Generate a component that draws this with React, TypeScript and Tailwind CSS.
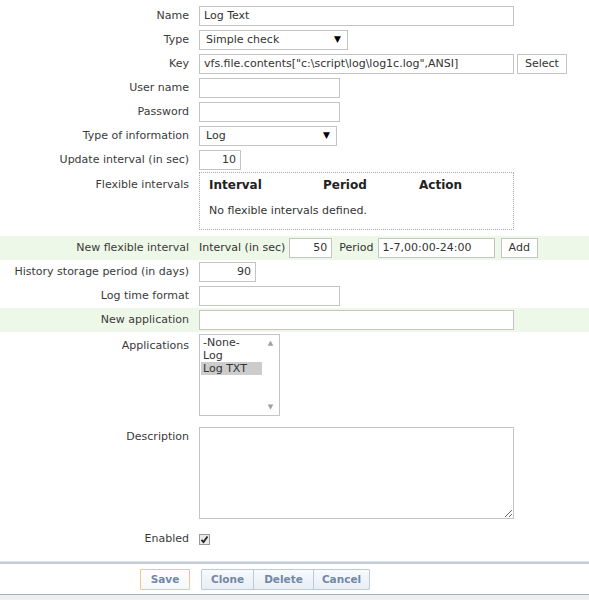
import React from "react";

const font = { fontFamily: '"DejaVu Sans", Verdana, sans-serif' };

function Row({ label, children, green, top, labelPad }: { label: string; children: React.ReactNode; green?: boolean; top?: boolean; labelPad?: string }) {
  return (
    <div className={`flex py-[2px] ${green ? "bg-[#eef8e8]" : ""} ${top ? "items-start" : "items-center"}`}>
      <div className={`w-[199px] shrink-0 pr-[10px] text-right text-[#3a3a3a] ${labelPad ?? ""}`}>{label}</div>
      <div className="flex items-center">{children}</div>
    </div>
  );
}

function Input({ w, value, right }: { w: string; value?: string; right?: boolean }) {
  return (
    <div className={`${w} h-[20px] border border-[#c4c4c4] bg-white px-[4px] leading-[18px] text-[#333] whitespace-nowrap overflow-hidden ${right ? "text-right" : ""}`}>
      {value}
    </div>
  );
}

function Select({ w, value }: { w: string; value: string }) {
  return (
    <div className={`${w} h-[20px] border border-[#c4c4c4] bg-white pl-[6px] pr-[6px] flex items-center justify-between text-[#333]`}>
      <span>{value}</span>
      <span className="text-[9px] text-black">▼</span>
    </div>
  );
}

function Btn({ children }: { children: React.ReactNode }) {
  return (
    <div className="h-[20px] border border-[#c4c4c4] bg-white px-[7px] leading-[18px] text-[#333]">{children}</div>
  );
}

export default function App() {
  return (
    <div className="w-[589px] h-[600px] bg-white text-[11px] overflow-hidden flex flex-col" style={font}>
      <div className="pt-[4px]">
        <Row label="Name"><Input w="w-[315px]" value="Log Text" /></Row>
        <Row label="Type"><Select w="w-[149px]" value="Simple check" /></Row>
        <Row label="Key">
          <Input w="w-[315px]" value={'vfs.file.contents["c:\\script\\log\\log1c.log",ANSI]'} />
          <div className="ml-[3px]"><Btn>Select</Btn></div>
        </Row>
        <Row label="User name"><Input w="w-[141px]" /></Row>
        <Row label="Password"><Input w="w-[141px]" /></Row>
        <Row label="Type of information"><Select w="w-[138px]" value="Log" /></Row>
        <Row label="Update interval (in sec)"><Input w="w-[42px]" value="10" right /></Row>
        <div className="-mt-[2px]" />
        <Row label="Flexible intervals" top labelPad="pt-[5px]">
          <div className="w-[315px] h-[58px] border border-dotted border-[#a8a8a8] px-[9px] pt-[3px]">
            <div className="flex font-bold text-[12px] text-[#222]">
              <div className="w-[114px]">Interval</div>
              <div className="w-[96px]">Period</div>
              <div>Action</div>
            </div>
            <div className="mt-[9px] text-[#333]">No flexible intervals defined.</div>
          </div>
        </Row>
        <div className="h-[4px]" />
        <Row label="New flexible interval" green>
          <span className="text-[#333]">Interval (in sec)</span>
          <div className="ml-[4px]"><Input w="w-[43px]" value="50" right /></div>
          <span className="ml-[7px] text-[#333]">Period</span>
          <div className="ml-[4px]"><Input w="w-[117px]" value="1-7,00:00-24:00" /></div>
          <div className="ml-[6px]"><Btn>Add</Btn></div>
        </Row>
        <Row label="History storage period (in days)"><Input w="w-[57px]" value="90" right /></Row>
        <Row label="Log time format"><Input w="w-[141px]" /></Row>
        <Row label="New application" green><Input w="w-[315px]" /></Row>
        <Row label="Applications" top labelPad="pt-[4px]">
          <div className="w-[81px] h-[82px] border border-[#c4c4c4] bg-white flex">
            <div className="flex-1 pt-[1px] pl-[1px] leading-[13px] text-[#333]">
              <div className="pl-[2px]">-None-</div>
              <div className="pl-[2px]">Log</div>
              <div className="pl-[2px] bg-[#cccccc]">Log TXT</div>
            </div>
            <div className="w-[17px] flex flex-col justify-between items-center py-[3px] text-[7px] text-[#a0a0a0]">
              <span>▲</span>
              <span>▼</span>
            </div>
          </div>
        </Row>
        <div className="h-[7px]" />
        <Row label="Description" top labelPad="pt-[2px]">
          <textarea className="w-[315px] h-[92px] border border-[#c4c4c4] bg-white block" />
        </Row>
        <div className="h-[8px]" />
        <Row label="Enabled">
          <div className="w-[11px] h-[11px] border border-[#9a9a9a] bg-[#eaeaea] flex items-center justify-center">
            <svg width="9" height="9" viewBox="0 0 9 9">
              <path d="M1.5 4.8 L3.5 7 L7.5 1.5" stroke="#222" strokeWidth="1.8" fill="none" />
            </svg>
          </div>
        </Row>
      </div>
      <div className="mt-[11px] border-t border-[#dbe3ea]" />
      <div className="border-t-[2px] border-[#c3ced8]" />
      <div className="h-[31px] flex items-center pt-[2px] border-b border-[#aab3bb] text-[10.5px]">
        <div className="ml-[140px] w-[50px] text-center h-[21px] border border-[#f2c688] bg-gradient-to-b from-white to-[#f5f7fa] leading-[19px] font-bold text-[#7188a6] rounded-[1px]">Save</div>
        <div className="ml-[11px] flex h-[21px] border border-[#bccbd9] bg-gradient-to-b from-[#f8fafc] to-[#e8eef4] font-bold text-[#7188a6] leading-[19px] rounded-[1px]">
          <div className="w-[51px] text-center">Clone</div>
          <div className="w-[60px] text-center border-l border-[#bccbd9]">Delete</div>
          <div className="w-[56px] text-center border-l border-[#bccbd9]">Cancel</div>
        </div>
      </div>
      <div className="flex-1 bg-[#edf0f3]" />
    </div>
  );
}
